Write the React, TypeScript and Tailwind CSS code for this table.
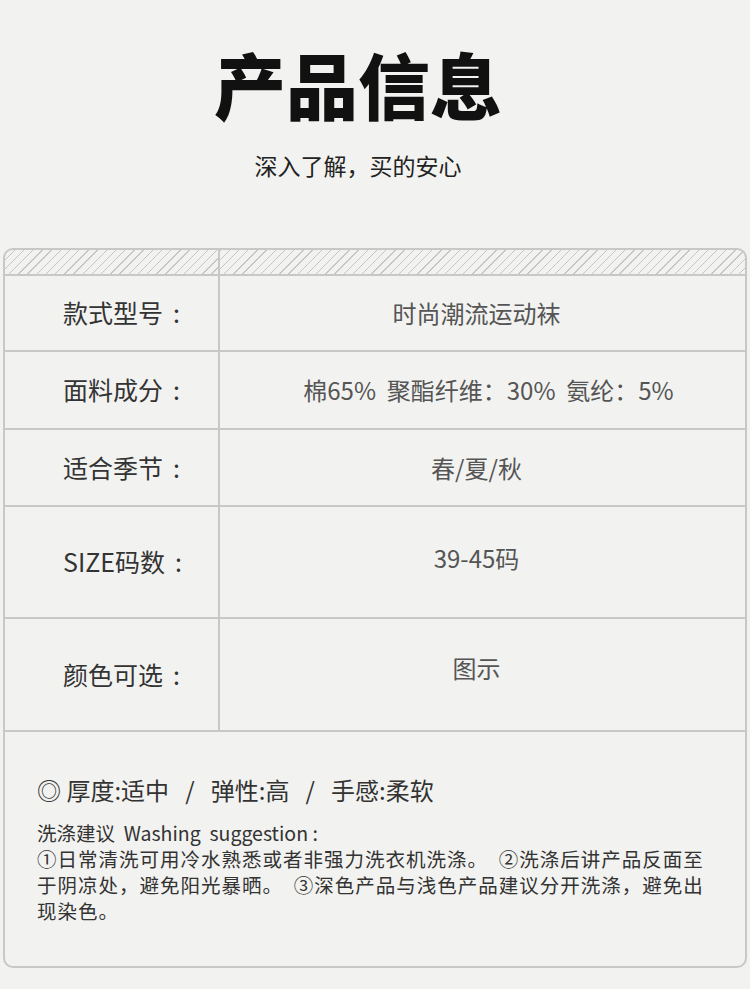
const font = { fontFamily: '"Noto Sans CJK SC", "Noto Sans", sans-serif' };

const rows = [
  { label: "款式型号", value: "时尚潮流运动袜", h: "h-[76px]", pad: "pb-0" },
  { label: "面料成分", value: "棉65%\u00a0\u00a0聚酯纤维：30%\u00a0\u00a0氨纶：5%", h: "h-[78px]", pad: "pl-[24px]" },
  { label: "适合季节", value: "春/夏/秋", h: "h-[77px]", pad: "pb-0" },
  { label: "SIZE码数", value: "39-45码", h: "h-[112px]", pad: "pb-[8px]" },
  { label: "颜色可选", value: "图示", h: "h-[113px]", pad: "pb-[14px]" },
];

const hatch =
  "bg-[repeating-linear-gradient(135deg,#c6c6c6_0px,#c6c6c6_1px,transparent_1px,transparent_6.5px)]";

export default function App() {
  return (
    <div className="min-h-[989px] w-[750px] bg-[#f2f2f0] text-[#333]" style={font}>
      {/* Header */}
      <div className="flex h-[248px] flex-col items-center pt-[43px] pr-[34px]">
        <h1 className="text-[72px] font-black leading-[80px] text-[#111]">产品信息</h1>
        <p className="mt-[27px] text-[23px] leading-[30px] text-[#222]">深入了解，买的安心</p>
      </div>

      {/* Table */}
      <div className="mx-[3px] w-[744px] overflow-hidden rounded-[10px] border-2 border-[#c8c8c8]">
        <div className="grid h-[26px] grid-cols-[215px_1fr] border-b-2 border-[#c8c8c8]">
          <div className={`border-r-2 border-[#c8c8c8] ${hatch}`} />
          <div className={hatch} />
        </div>

        {rows.map((r) => (
          <div key={r.label} className={`grid grid-cols-[215px_1fr] border-b-2 border-[#c8c8c8] ${r.h}`}>
            <div className="flex items-center border-r-2 border-[#c8c8c8] pl-[58px] text-[25px] text-[#333]">
              {r.label}
              <span className="ml-[10px]">:</span>
            </div>
            <div className={`flex items-center justify-center pr-[12px] text-[24px] text-[#555] ${r.pad}`}>
              {r.value}
            </div>
          </div>
        ))}

        {/* Notes */}
        <div className="h-[234px] pl-[32px] pt-[42px]">
          <p className="text-[24px] leading-[32px] text-[#333]">
            ◎ 厚度:适中&nbsp;&nbsp;&nbsp;/&nbsp;&nbsp;&nbsp;弹性:高&nbsp;&nbsp;&nbsp;/&nbsp;&nbsp;&nbsp;手感:柔软
          </p>
          <div className="mt-[14px] text-[19.5px] leading-[26px] text-[#333]">
            <p>洗涤建议&nbsp;&nbsp;Washing&nbsp;&nbsp;suggestion :</p>
            <p className="tracking-[1px]">
              ①日常清洗可用冷水熟悉或者非强力洗衣机洗涤。&nbsp;&nbsp;②洗涤后讲产品反面至
              <br />
              于阴凉处，避免阳光暴晒。&nbsp;&nbsp;③深色产品与浅色产品建议分开洗涤，避免出
              <br />
              现染色。
            </p>
          </div>
        </div>
      </div>
    </div>
  );
}
